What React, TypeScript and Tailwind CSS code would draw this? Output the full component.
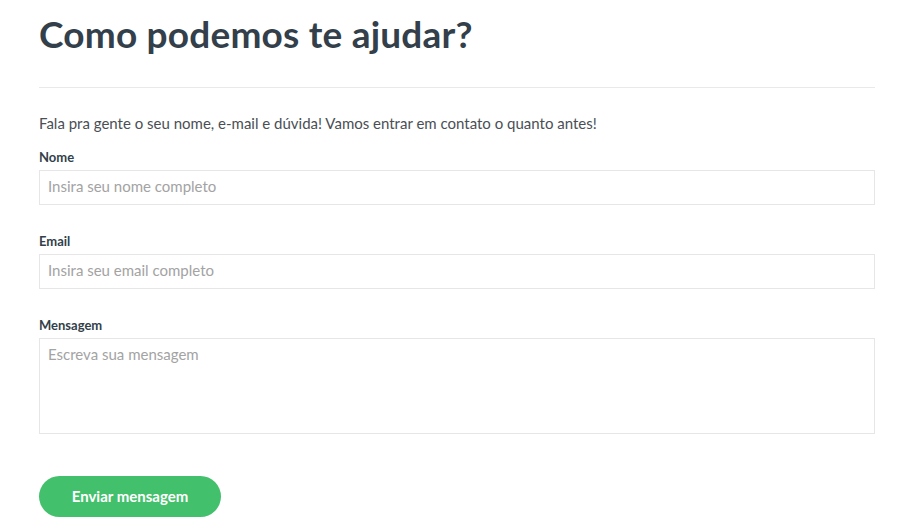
export default function App() {
  return (
    <div className="w-[900px] h-[532px] bg-white overflow-hidden" style={{ fontFamily: 'Lato, "Open Sans", sans-serif' }}>
      <div className="ml-[39px] w-[836px]">
        <h1 className="pt-[12px] text-[37px] leading-[44px] font-bold text-[#333f4a] tracking-[0.2px]">Como podemos te ajudar?</h1>
        <div className="mt-[31px] h-px bg-[#e9e9e9]" />
        <p className="mt-[25px] text-[15px] leading-[20px] text-[#4a4f55]">Fala pra gente o seu nome, e-mail e dúvida! Vamos entrar em contato o quanto antes!</p>
        <form className="flex flex-col">
          <label className="mt-[16px] text-[13px] leading-[16px] font-bold text-[#333f4a]">Nome</label>
          <input className="mt-[5px] h-[35px] border border-[#e6e6e6] px-[8px] pb-[3px] text-[15px] text-[#333] placeholder:text-[#a3a3a3] outline-none" placeholder="Insira seu nome completo" />
          <label className="mt-[28px] text-[13px] leading-[16px] font-bold text-[#333f4a]">Email</label>
          <input className="mt-[5px] h-[35px] border border-[#e6e6e6] px-[8px] pb-[3px] text-[15px] text-[#333] placeholder:text-[#a3a3a3] outline-none" placeholder="Insira seu email completo" />
          <label className="mt-[28px] text-[13px] leading-[16px] font-bold text-[#333f4a]">Mensagem</label>
          <textarea className="mt-[5px] h-[96px] resize-none border border-[#e6e6e6] px-[8px] pt-[4px] text-[15px] text-[#333] placeholder:text-[#a3a3a3] outline-none" placeholder="Escreva sua mensagem" />
          <div>
            <button type="button" className="mt-[42px] w-[182px] h-[41px] rounded-full bg-[#43c06b] text-white text-[15px] font-bold">Enviar mensagem</button>
          </div>
        </form>
      </div>
    </div>
  );
}
